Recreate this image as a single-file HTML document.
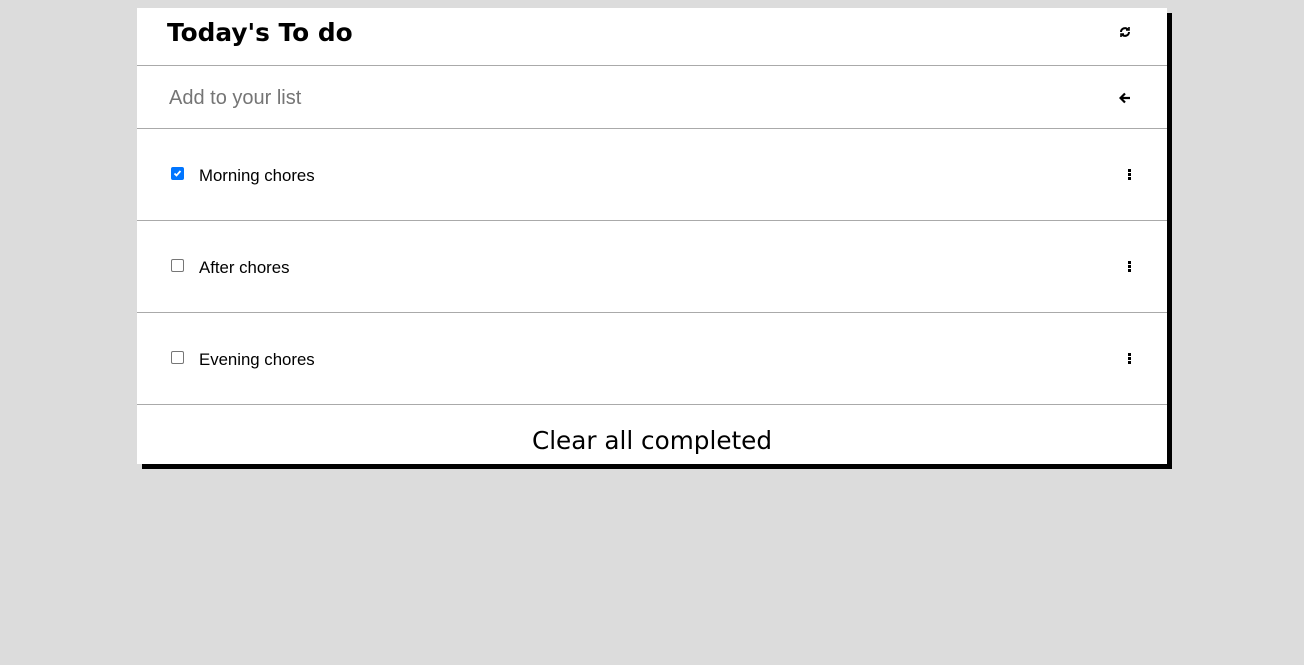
<!DOCTYPE html>
<html><head><style>
body{margin:0;background:#dcdcdc;width:1304px;height:665px;overflow:hidden}
.card{position:absolute;left:137px;top:8px;width:1030px;height:456px;background:#fff;box-shadow:5px 5px 0 #000}
.hdr{position:absolute;left:0;top:0;width:1030px;height:57px;border-bottom:1px solid #aaa}
.title{position:absolute;left:30px;top:10px;font:bold 24.8px "DejaVu Sans",Verdana,sans-serif;color:#000}
.inp{position:absolute;left:0;top:58px;width:1030px;height:62px;border-bottom:1px solid #aaa}
.inp span{position:absolute;left:32px;top:21px;font:20px "Liberation Sans",Arial,sans-serif;color:#757575}
.row{position:absolute;left:0;width:1030px;height:91px;border-bottom:1px solid #aaa}
.row .cb{position:absolute;left:34px;top:38px;width:13px;height:13px;box-sizing:border-box;border:1px solid #767676;border-radius:2px;background:#fff}
.row .cb.on{background:#0075ff;border-color:#0075ff}
.row .cb svg{position:absolute;left:0;top:0}
.row .t{position:absolute;left:62px;top:37px;font:16.8px "Liberation Sans",Arial,sans-serif;color:#000}
.dots{position:absolute;left:991px;top:40px;width:3px}
.dots i{display:block;width:3px;height:3px;background:#000;margin-bottom:1px}
.foot{position:absolute;left:0;top:418px;width:1030px;text-align:center;font:24.7px "DejaVu Sans",Verdana,sans-serif;color:#000}
</style></head><body>
<div class="card">
 <div class="hdr"><div class="title">Today's To do</div>
  <svg style="position:absolute;left:982px;top:18px" width="12" height="12" viewBox="0 0 12 12" fill="none" stroke="#000" stroke-width="2"><path d="M2 6a4 4 0 0 1 7-2.5M10 6a4 4 0 0 1-7 2.5"/><path d="M10 1v3H7M2 11V8h3" stroke-width="1.6"/></svg>
 </div>
 <div class="inp"><span>Add to your list</span>
  <svg style="position:absolute;left:982px;top:26px" width="12" height="12" viewBox="0 0 12 12" fill="none" stroke="#000" stroke-width="2.2"><path d="M11 6H2M6 1.5L1.5 6 6 10.5"/></svg>
 </div>
 <div class="row" style="top:121px"><div class="cb on"><svg width="11" height="11" viewBox="0 0 11 11"><path d="M2.5 5.5l2 2 4-4.5" stroke="#fff" stroke-width="1.8" fill="none"/></svg></div><div class="t">Morning chores</div><div class="dots"><i></i><i></i><i></i></div></div>
 <div class="row" style="top:213px"><div class="cb"></div><div class="t">After chores</div><div class="dots"><i></i><i></i><i></i></div></div>
 <div class="row" style="top:305px"><div class="cb"></div><div class="t">Evening chores</div><div class="dots"><i></i><i></i><i></i></div></div>
 <div class="foot">Clear all completed</div>
</div>
</body></html>
